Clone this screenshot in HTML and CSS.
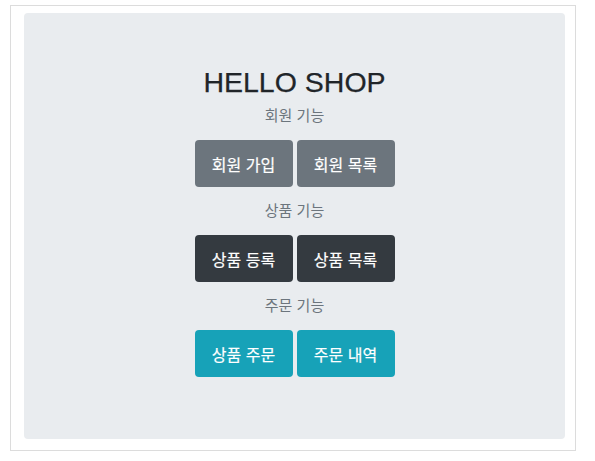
FILE: index.html
```html
<!DOCTYPE html>
<html lang="ko">
<head>
<meta charset="utf-8">
<title>HELLO SHOP</title>
<link rel="stylesheet" href="styles.css">
</head>
<body>
<div class="frame">
  <div class="jumbotron">
    <h1 class="title">HELLO SHOP</h1>
    <p class="lead">회원 기능</p>
    <div class="btns">
      <a class="btn btn-secondary">회원 가입</a>
      <a class="btn btn-secondary">회원 목록</a>
    </div>
    <p class="lead">상품 기능</p>
    <div class="btns">
      <a class="btn btn-dark">상품 등록</a>
      <a class="btn btn-dark">상품 목록</a>
    </div>
    <p class="lead">주문 기능</p>
    <div class="btns">
      <a class="btn btn-info">상품 주문</a>
      <a class="btn btn-info">주문 내역</a>
    </div>
  </div>
</div>
</body>
</html>
```
FILE: styles.css
```css
html, body {
  margin: 0;
  padding: 0;
  background: #fff;
}
body {
  font-family: "Liberation Sans", "Noto Sans CJK KR", sans-serif;
  color: #212529;
}
.frame {
  margin: 5px 19px 10px 10px;
  height: 446px;
  box-sizing: border-box;
  border: 1px solid #dcdcdc;
  padding: 7px 10px 11px 13px;
  display: flex;
}
.jumbotron {
  flex: 1;
  background: #e9ecef;
  border-radius: 4px;
  display: flex;
  flex-direction: column;
  align-items: center;
  padding-top: 52px;
}
.title {
  margin: 0;
  font-size: 28.5px;
  font-weight: 400;
  line-height: 1.2;
  color: #212529;
  -webkit-text-stroke: 0.25px #212529;
}
.lead {
  margin: 6px 0 13px;
  font-size: 15px;
  line-height: 22px;
  color: #6c757d;
}
.btns + .lead {
  margin-top: 13px;
}
.btns {
  display: flex;
  gap: 4px;
}
.btn {
  display: flex;
  align-items: center;
  justify-content: center;
  width: 98px;
  height: 47px;
  box-sizing: border-box;
  border-radius: 4px;
  color: #fff;
  font-size: 16px;
  font-weight: 400;
  -webkit-text-stroke: 0.2px #fff;
  text-decoration: none;
}
.btn-secondary { background: #6c757d; }
.btn-dark { background: #343a40; }
.btn-info { background: #17a2b8; }
```
